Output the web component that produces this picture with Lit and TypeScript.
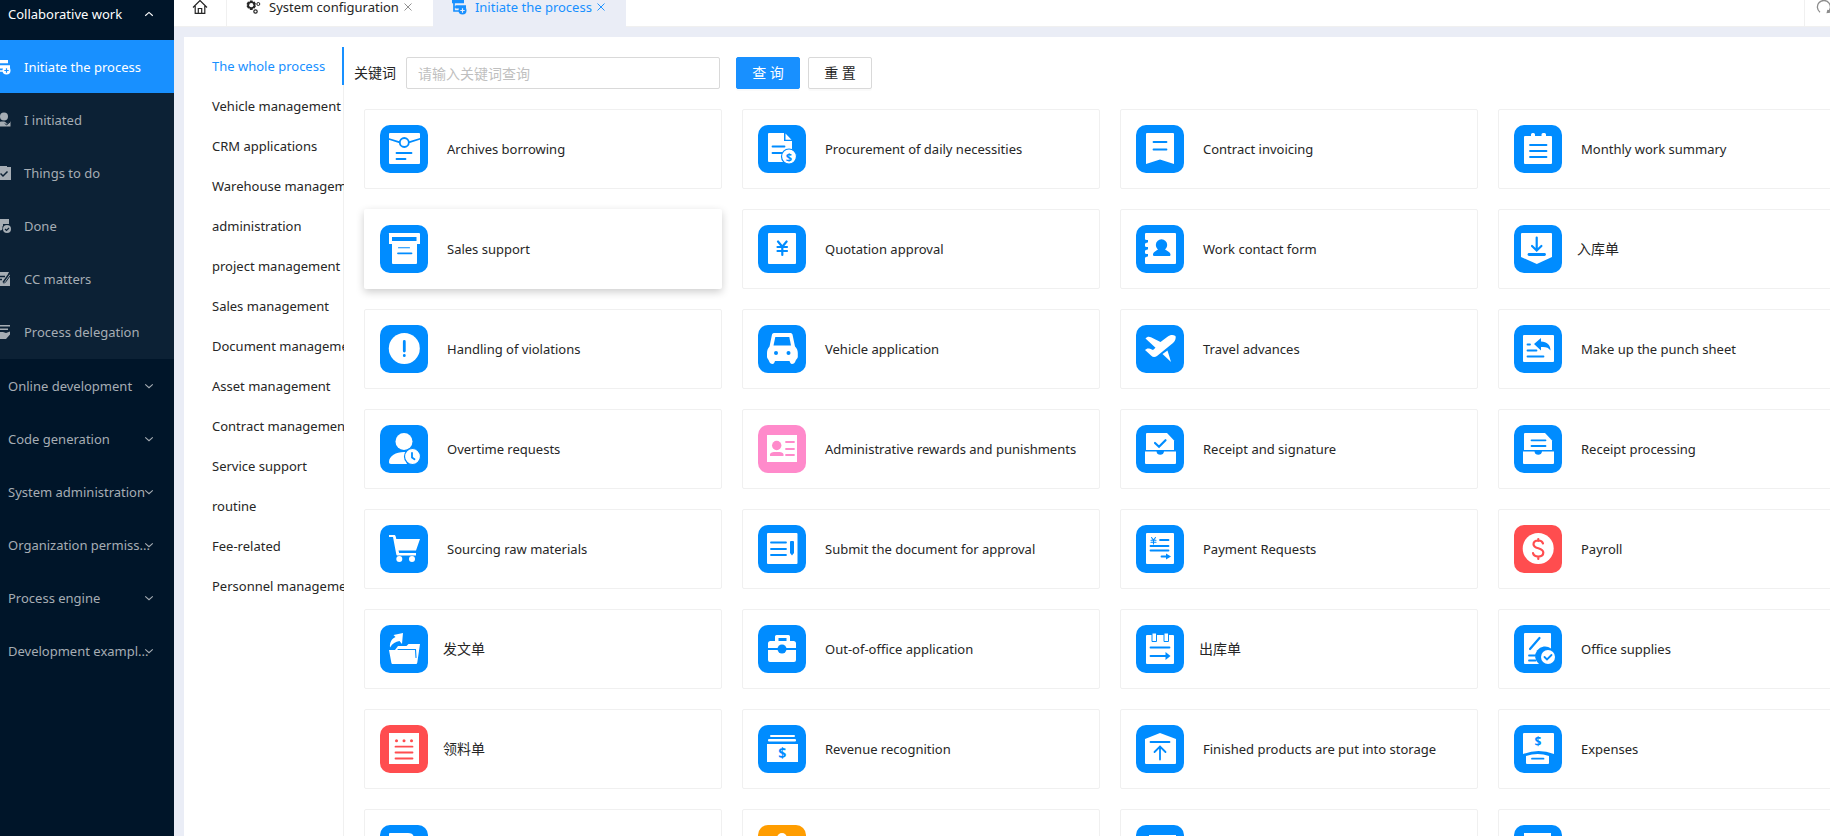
import { LitElement, html, svg, css } from "lit";
import type { SVGTemplateResult } from "lit";
import { customElement, property } from "lit/decorators.js";
import { classMap } from "lit/directives/class-map.js";

/* Tile glyphs, drawn on a 48 x 48 field. Class "w" is the white shape,
   "k" a cut-out in the tile colour, "l" a line in the tile colour. */
const tiles: Record<string, SVGTemplateResult> = {
  archive: svg`<rect class="w" x="9" y="8" width="31" height="31" rx="1"/><path class="l" d="M9 14l10 3.2M39.500 14l-10 3.200M16.500 28h15M16.500 34h9"/><circle class="l" cx="24.300" cy="17.500" r="4.500"/>`,
  procurement: svg`<path class="w" d="M11 8h15v8h8v21H11a1 1 0 0 1-1-1V9a1 1 0 0 1 1-1z"/><path class="w" d="M27.500 8.500l6 6.300h-6z"/><path class="l" d="M14.500 21.500h12M14.500 28h10"/><circle class="w ring" cx="31" cy="31.500" r="7.500"/><text x="31" y="35.500" font-size="11">$</text>`,
  invoice: svg`<path class="w" d="M11 8h26a1 1 0 0 1 1 1v30l-14-4.500L10 39V9a1 1 0 0 1 1-1z"/><path class="l" d="M17.500 17h13M17.500 24.500h13"/>`,
  notepad: svg`<path class="w" d="M11 11h6V9.500a1.500 1.500 0 0 1 1.500-1.500h1A1.500 1.500 0 0 1 21 9.500V11h6.500V9.500A1.500 1.500 0 0 1 29 8h1.500A1.500 1.500 0 0 1 32 9.500V11h5a1 1 0 0 1 1 1v26a1 1 0 0 1-1 1H11a1 1 0 0 1-1-1V12a1 1 0 0 1 1-1z"/><path class="l" d="M16 20h16.500M16 26h16.500M16 32h16.500"/>`,
  box: svg`<path class="w" d="M9 8h30a1 1 0 0 1 1 1v10h-3v19a1 1 0 0 1-1 1H13a1 1 0 0 1-1-1V19H9V9a1 1 0 0 1 0-1z"/><path class="k" d="M12 12h24.500v4H12z"/><path class="l thin" d="M18.500 22.700h11"/><path class="l" d="M18 28.300h13.500"/>`,
  yuan: svg`<rect class="w" x="10" y="8" width="28" height="31" rx="1"/><path class="l mid" d="M20 16.500l4.300 5.200 4.300-5.200M24.300 21.700V30M19.500 22h9.500M19.500 26h9.500"/>`,
  contact: svg`<rect class="w" x="9" y="8" width="31" height="31" rx="1"/><path class="k" d="M9 14.500a2 2 0 1 1 0 4zM9 21.500a2 2 0 1 1 0 4zM9 28.500a2 2 0 1 1 0 4z"/><path class="k" d="M9 15h3v2.500H9zM9 22h3v2.500H9zM9 29h3v2.500H9z"/><circle class="k" cx="25.500" cy="20" r="5.700"/><path class="k" d="M22.500 23h6c0 2.500 6 3.500 6 6.500 0 1-.500 1.500-1.500 1.500H18.500c-1 0-1.500-.500-1.500-1.500 0-3 5.500-4 5.500-6.500z"/>`,
  inbound: svg`<path class="w" d="M8 8h29a1 1 0 0 1 1 1v23l-15.200 7L7 32V9a1 1 0 0 1 1-1z"/><path class="l mid" d="M22.700 12.500v12.500M18 21l4.700 4.500L27.400 21"/><path class="l bold" d="M15 29.500h15.500"/>`,
  alert: svg`<circle class="w" cx="24.300" cy="23.500" r="15.500"/><path class="l bold" d="M24.300 16.500v9.500M24.300 30.500v.200"/>`,
  car: svg`<path class="w" d="M16 8h16.500a2 2 0 0 1 2 1.500L37 21.500c2 2 2.800 4 2.800 6.500v4c0 1.500-2 2.500-2.300 4-.500 1.800-2 3-3.500 3s-2-1.500-2.500-3H17c-.500 1.500-1 3-2.500 3s-3-1.200-3.500-3c-.300-1.500-2-2.500-2-4v-4c0-2.500.800-4.500 2.500-6.500L14 9.500A2 2 0 0 1 16 8z"/><path class="k" d="M17.300 12h14l1.700 8.500H15.500z"/><circle class="k" cx="18" cy="28" r="2"/><circle class="k" cx="30.500" cy="28" r="2"/>`,
  plane: svg`<path class="w" d="M9.500 13.500c1.500-2 3.500-2.200 5.500-1.300l9.500 4.800 7-5.200c2.500-2 5.500-2.300 8-.800.800 2.500-.500 5-2.500 7L21 31c-2 1.300-4.200 1.300-5.700-.300L9 25c1.500-1.700 3.200-2 5-1.200l3 1.200 2.500-2.300z"/><path class="w" d="M26.500 29l5-3.500L35 37z"/>`,
  punch: svg`<rect class="w" x="9" y="10" width="31" height="27" rx="1"/><path class="l" d="M13.500 19.500h2.500M13.500 25.500h9M13.500 31.500h16"/><path class="k" d="M20 19l7-6v3.500c6 0 9.500 3.500 9.500 9-2-3-5-4-9.500-3.500v3.500z"/>`,
  overtime: svg`<circle class="w" cx="24" cy="16.500" r="8.500"/><path class="w" d="M9 37c0-6 7-10 15-10 3 0 5.500.500 7 1l-6 6 2 5H11c-1.500 0-2-.700-2-2z"/><circle class="w ring" cx="32.500" cy="31.500" r="8"/><path class="l" d="M32 28v4.500l2.500 1.800"/>`,
  badge: svg`<rect class="w" x="9" y="10" width="30" height="27"/><circle class="k" cx="18.700" cy="20.500" r="4.700"/><path class="k" d="M12 31v-1.500c0-1.500 2-2.500 4-2.500h5.500c2 0 4 1 4 2.500V31z"/><path class="l" d="M28 17h8M28 24h8M28 30h8"/>`,
  receipt: svg`<path class="w" d="M11 8h20l7 7.500V25H10V9a1 1 0 0 1 1-1z"/><path class="l mid" d="M19 18l4 3.700 6.500-6.500"/><path class="w" d="M9 26.500h11.500a3.800 3.800 0 0 0 7.500 0H40V38a1 1 0 0 1-1 1H10a1 1 0 0 1-1-1z"/>`,
  processing: svg`<path class="w" d="M11 8h20l7 7.500V25H10V9a1 1 0 0 1 1-1z"/><path class="l" d="M17.500 15.300h14M17.500 21h14"/><path class="w" d="M9 26.500h11.500a3.800 3.800 0 0 0 7.500 0H40V38a1 1 0 0 1-1 1H10a1 1 0 0 1-1-1z"/>`,
  cart: svg`<path class="w" d="M9 10h5c1 0 1.500.500 1.700 1.500l.600 2.500H40l-4 11.500H18.500l.700 2.500H36v2.500H17.500c-.700 0-1-.500-1.200-1L13 12H9z"/><circle class="w" cx="19.300" cy="34" r="3"/><circle class="w" cx="32" cy="34" r="3"/>`,
  submit: svg`<rect class="w" x="9" y="8" width="30.500" height="31" rx="1"/><path class="l" d="M13 17.500h15M13 24h15M13 30h15"/><path class="k" d="M33 16h2a1 1 0 0 1 1 1v11l-2 2.500-2-2.500V17a1 1 0 0 1 1-1z"/>`,
  payment: svg`<rect class="w" x="10" y="8" width="28" height="31" rx="1"/><path class="l thin" d="M15.500 12.500l2 2.500 2-2.500M17.500 15v4M15 15.300h5M15 17.200h5"/><path class="l" d="M24 15h8.500M14.500 21h18M14.500 25.500h18M25.500 31.500h5"/><path class="k" d="M30 28.500l5 3-5 3z"/>`,
  payroll: svg`<circle class="w" cx="24.200" cy="23.500" r="15.500"/><path class="l mid" d="M29 18.500c-.500-2-2.300-3-4.700-3-2.800 0-4.800 1.300-4.800 3.700 0 5.300 9.800 2.900 9.800 8.400 0 2.600-2.100 4-5 4-2.700 0-4.800-1.200-5.300-3.500M24.300 14v2M24.300 31.500v2.500"/>`,
  outgoing: svg`<path class="w" d="M9 25h6l3-4h8.500l2-2H40l-2.700 18.500c-.200 1-.700 1.500-1.500 1.500H13c-1 0-1.500-.500-1.700-1.500z"/><path class="l thin" d="M18 24.500h17.500l.500 8"/><path class="w" d="M10 22.500c-.500-5.500 2-9 5.500-10.500l-2-2L23 8l-1 11-2.500-3c-4 .500-7 2.500-9.500 6.500z"/>`,
  briefcase: svg`<path class="w" d="M12.500 16H17v-4.500a1.500 1.500 0 0 1 1.500-1.500h12a1.500 1.500 0 0 1 1.500 1.500V16h3.500a2.500 2.500 0 0 1 2.500 2.500V35a2 2 0 0 1-2 2H12a2 2 0 0 1-2-2V18.500a2.500 2.500 0 0 1 2.500-2.500z"/><path class="k" d="M20.500 13h8v3h-8z"/><path class="l" d="M10 24h28"/><circle class="k" cx="24" cy="24" r="4.500"/>`,
  outbound: svg`<rect class="w" x="10" y="10" width="28" height="29" rx="1"/><path class="w edge" d="M16 8h4.500v8.500H16zM28 8h4.500v8.500H28z"/><path class="l" d="M14.500 22.500h19M14.500 31h17"/><path class="k" d="M29.500 27l5 4-5 4z"/>`,
  supplies: svg`<path class="w" d="M11 8h25a1 1 0 0 1 1 1v30H11a1 1 0 0 1-1-1V9a1 1 0 0 1 1-1z"/><path class="l mid" d="M16 24l9.500-11"/><path class="l" d="M15 30.500h9M15 35.500h6.500"/><path class="k" d="M25 39a9 9 0 0 1 12-15.500V40z"/><circle class="w" cx="34" cy="32" r="7"/><path class="l" d="M30.500 32l2.500 2.500 4.500-4.500"/>`,
  requisition: svg`<rect class="w" x="9" y="8" width="30" height="31"/><circle class="k" cx="16.500" cy="15.700" r="1.500"/><circle class="k" cx="24" cy="15.700" r="1.500"/><circle class="k" cx="31.500" cy="15.700" r="1.500"/><path class="l" d="M15.500 21.700h17M15.500 27.500h17M15.500 33.500h17"/>`,
  revenue: svg`<rect class="w" x="12" y="10" width="25" height="2" rx="1"/><rect class="w" x="10" y="14" width="28" height="2.500" rx="1"/><rect class="w" x="9" y="19" width="31" height="18"/><text x="24.300" y="33" font-size="14">$</text>`,
  storage: svg`<path class="w" d="M9 14l15-6 16 6v24a1 1 0 0 1-1 1H10a1 1 0 0 1-1-1z"/><path class="l" d="M14.500 17h19M24 34.500V21.500M18.500 27l5.500-5.500 5.500 5.500"/>`,
  expenses: svg`<path class="w" d="M10 8h29a1 1 0 0 1 1 1v20q-15.500-6-31 0V9a1 1 0 0 1 1-1z"/><path class="w" d="M12 31q12-4 23 0v7a1 1 0 0 1-1 1H13a1 1 0 0 1-1-1z"/><path class="l" d="M18 33.700h11.500"/><text x="24" y="21" font-size="12">$</text>`,
  sheet: svg`<path class="w" d="M10 8h18c5 0 6 3 6 6v25H9V9a1 1 0 0 1 1-1z"/>`,
  person: svg`<circle class="w" cx="24" cy="13" r="5"/><path class="w" d="M12 38c0-12 5-19 12-19s12 7 12 19z"/>`,
  page: svg`<rect class="w" x="13" y="10" width="27" height="29"/>`,
  form: svg`<rect class="w" x="10" y="8" width="27" height="31"/>`,
};

/* Line and glyph icons for the menu and the tab bar, on a 16 x 16 field. */
const glyphs: Record<string, SVGTemplateResult> = {
  start: svg`<path d="M1 1h12v3.300H1zM4.500 6.300H15v3.200H4.500z"/><path d="M3 4v4h2M3 8v4h5" fill="none" stroke="currentColor" stroke-width="1.700"/><circle cx="11.500" cy="11.500" r="4" /><path d="M11.500 9.300v4.400M9.300 11.500h4.400" stroke="var(--cut)" stroke-width="1.200"/>`,
  user: svg`<circle cx="9" cy="4.500" r="4"/><path d="M1 14.500c0-4 3-5 7-5 1.500 0 2.500.500 3 1l1 1.500 3.500-2.500v5z"/><path d="M10 11.500l1.500 1.500 3.500-3" fill="none" stroke="var(--cut)"/>`,
  todo: svg`<path d="M2 2h3V1h7v1h4v13H1V2z"/><path d="M5.500 8.500l2.500 2.500 4.500-4.500" fill="none" stroke="var(--cut)" stroke-width="1.500"/>`,
  done: svg`<path d="M3 1h11v5H8v2.500H5V15H1V9h3V6H3z"/><circle cx="12" cy="11" r="4"/><circle cx="5" cy="10" r="2.500"/><path d="M10 11l1.500 1.500 2.500-2.500" fill="none" stroke="var(--cut)" stroke-width="1.200"/>`,
  cc: svg`<path d="M1 1h13l-1 2 2 1v11H1z"/><path d="M3 5.500h7M3 8.500h4M14 3l-6 8.500" fill="none" stroke="var(--cut)" stroke-width="1.400"/><path d="M15.700 4L11 10.500l-2 2" fill="none" stroke="var(--cut)" stroke-width="1"/>`,
  delegate: svg`<path d="M4 1h11v1.500H4zM3 4.500h10V6H3zM2 8h6l3 1 4-1.500v3L11 15H5l-3-2z"/>`,
  home: svg`<path d="M1 8.500L8 1.500l7 7M3.200 7v7.300h9.600V7M6.300 14v-4.500h3.400V14" fill="none" stroke="currentColor" stroke-width="1.200"/>`,
  gears: svg`<path d="M5 1.500h2.500l.5 1.500 1.500-.500L11 5l-1 1 1 1-1.500 2.500L8 9.300l-.5 1.700H5l-.5-1.700-1.500.200L1.500 7l1-1-1-1L3 2.500l1.500.500z"/><circle cx="6.300" cy="6.200" r="2.100" fill="var(--cut)"/><circle cx="13.300" cy="5" r="1.500" fill="none" stroke="currentColor"/><circle cx="10.500" cy="12.500" r="1.700" fill="none" stroke="currentColor" stroke-width="1.200"/>`,
  down: svg`<path d="M3.700 6.200L8 10l4.300-3.800" fill="none" stroke="currentColor" stroke-width="1.300"/>`,
  up: svg`<path d="M3.700 10L8 6.200l4.300 3.800" fill="none" stroke="currentColor" stroke-width="1.300"/>`,
  close: svg`<path d="M4 4l8 8M12 4l-8 8" fill="none" stroke="currentColor" stroke-width="1.100"/>`,
  reload: svg`<path d="M4 13.200A6.500 6.500 0 1 1 11.500 13.400M14 13l-2.700.500L12 10.800" fill="none" stroke="currentColor" stroke-width="1.300"/>`,
};

type Process = [icon: string, title?: string, color?: string];

const BLUE = "#008cff";

const processes: Process[] = [
  ["archive", "Archives borrowing"],
  ["procurement", "Procurement of daily necessities"],
  ["invoice", "Contract invoicing"],
  ["notepad", "Monthly work summary"],
  ["box", "Sales support"],
  ["yuan", "Quotation approval"],
  ["contact", "Work contact form"],
  ["inbound", "入库单"],
  ["alert", "Handling of violations"],
  ["car", "Vehicle application"],
  ["plane", "Travel advances"],
  ["punch", "Make up the punch sheet"],
  ["overtime", "Overtime requests"],
  ["badge", "Administrative rewards and punishments", "#ff8acb"],
  ["receipt", "Receipt and signature"],
  ["processing", "Receipt processing"],
  ["cart", "Sourcing raw materials"],
  ["submit", "Submit the document for approval"],
  ["payment", "Payment Requests"],
  ["payroll", "Payroll", "#ff4d4f"],
  ["outgoing", "发文单"],
  ["briefcase", "Out-of-office application"],
  ["outbound", "出库单"],
  ["supplies", "Office supplies"],
  ["requisition", "领料单", "#ff4d4f"],
  ["revenue", "Revenue recognition"],
  ["storage", "Finished products are put into storage"],
  ["expenses", "Expenses"],
  ["sheet"],
  ["person", "", "#ff9d00"],
  ["page"],
  ["form"],
];

const categories = [
  "The whole process", "Vehicle management", "CRM applications", "Warehouse management",
  "administration", "project management", "Sales management", "Document management",
  "Asset management", "Contract management", "Service support", "routine",
  "Fee-related", "Personnel management",
];

const work: [string, string][] = [
  ["start", "Initiate the process"],
  ["user", "I initiated"],
  ["todo", "Things to do"],
  ["done", "Done"],
  ["cc", "CC matters"],
  ["delegate", "Process delegation"],
];

const sections = [
  "Online development", "Code generation", "System administration",
  "Organization permiss...", "Process engine", "Development exampl...",
];

const glyph = (name: string) =>
  html`<svg class="glyph" viewBox="0 0 16 16" fill="currentColor" aria-hidden="true">${glyphs[name]}</svg>`;

const shared = css`
  *, *::before, *::after { box-sizing: border-box; }
  a { color: inherit; text-decoration: none; }
  button { font: inherit; color: inherit; cursor: pointer; }
  ul { list-style: none; margin: 0; padding: 0; }
  .glyph { display: block; width: 16px; height: 16px; flex: none; }
`;

@customElement("side-menu")
export class SideMenu extends LitElement {
  static styles = [shared, css`
    :host { display: block; background: #001529; color: #a6adb4; --cut: #0c2135; }
    nav { margin-top: -13px; }
    .section {
      position: relative; display: flex; align-items: center; width: 100%; height: 53px;
      padding: 0 0 0 8px; border: 0; background: none; white-space: nowrap;
    }
    .section .glyph { position: absolute; right: 18px; width: 14px; height: 14px; }
    .open { color: #fff; }
    .sub { background: #0c2135; padding-bottom: 1px; }
    .item {
      display: flex; align-items: center; gap: 13px; height: 53px; padding-left: 0;
      white-space: nowrap;
    }
    .item .glyph { margin-left: -5px; }
    .active { background: #1890ff; color: #fff; --cut: #1890ff; }
  `];

  render() {
    return html`<nav>
      <button class="section open" aria-expanded="true">Collaborative work${glyph("up")}</button>
      <ul class="sub">
        ${work.map(([icon, label], i) => html`<li>
          <a href="#" class=${classMap({ item: true, active: i === 0 })}>${glyph(icon)}<span>${label}</span></a>
        </li>`)}
      </ul>
      ${sections.map((label) => html`<button class="section" aria-expanded="false">${label}${glyph("down")}</button>`)}
    </nav>`;
  }
}

@customElement("tab-bar")
export class TabBar extends LitElement {
  static styles = [shared, css`
    :host {
      display: flex; height: 40px; margin-top: -13px; background: #fff;
      border-bottom: 1px solid #f0f0f0; color: #262626; --cut: #fff;
    }
    .home { display: flex; align-items: center; width: 53px; padding-left: 18px; border-right: 1px solid #f0f0f0; }
    .tab { display: flex; align-items: center; padding: 0 18px; white-space: nowrap; }
    .tab a { display: flex; align-items: center; gap: 8px; }
    .close { padding: 0; border: 0; background: none; color: #8c8c8c; }
    .close .glyph { width: 14px; height: 14px; margin: 0 0 0 2px; }
    .active, .active .close { color: #1890ff; }
    .active { background: #eaedf6; margin-bottom: -1px; --cut: #eaedf6; }
    .reload {
      width: 26px; margin-left: auto; padding: 0 0 0 11px; border: 0;
      border-left: 1px solid #f0f0f0; background: none; color: #8c8c8c;
    }
  `];

  render() {
    return html`
      <a class="home" href="#" aria-label="Home">${glyph("home")}</a>
      <div class="tab"><a href="#">${glyph("gears")}System configuration</a><button class="close" aria-label="Close">${glyph("close")}</button></div>
      <div class="tab active"><a href="#">${glyph("start")}Initiate the process</a><button class="close" aria-label="Close">${glyph("close")}</button></div>
      <button class="reload" aria-label="Reload">${glyph("reload")}</button>
    `;
  }
}

@customElement("process-card")
export class ProcessCard extends LitElement {
  @property({ attribute: false }) item: Process = ["form"];
  @property({ type: Boolean }) raised = false;

  static styles = [shared, css`
    :host { display: block; min-width: 0; }
    .card {
      display: flex; align-items: center; gap: 15px; height: 80px; padding: 0 15px;
      border: 1px solid #f0f0f0; border-radius: 2px; background: #fff; color: #262626;
    }
    .raised { border-color: transparent; box-shadow: 0 3px 8px rgba(0, 0, 0, 0.2); }
    .tile { width: 48px; height: 48px; border-radius: 10px; flex: none; background: var(--tile); }
    .title { white-space: nowrap; padding-left: 4px; }
    .cjk { padding-left: 0; font-size: 14px; }
    .w { fill: #fff; }
    .k { fill: var(--tile); }
    .l { fill: none; stroke: var(--tile); stroke-width: 1.8; stroke-linecap: round; }
    .thin { stroke-width: 1.1; }
    .mid { stroke-width: 2.2; }
    .bold { stroke-width: 2.8; }
    .ring { stroke: var(--tile); stroke-width: 1.2; }
    .edge { stroke: var(--tile); stroke-width: 1; }
    text { fill: var(--tile); font-family: "Open Sans", sans-serif; font-weight: 700; text-anchor: middle; }
  `];

  render() {
    const [icon, title, color] = this.item;
    const cjk = /[\u4e00-\u9fff]/.test(title ?? "");
    return html`<a href="#" class=${classMap({ card: true, raised: this.raised })} style="--tile:${color ?? BLUE}">
      <svg class="tile" viewBox="0 0 48 48" aria-hidden="true">${tiles[icon]}</svg>
      <span class=${classMap({ title: true, cjk })}>${title}</span>
    </a>`;
  }
}

@customElement("app-root")
export class AppRoot extends LitElement {
  static styles = [shared, css`
    :host {
      display: grid; grid-template-columns: 174px minmax(0, 1fr); height: 100vh; overflow: hidden;
      background: #eaedf6; color: #262626;
      font: 13px/20px "Noto Sans", "Noto Sans CJK SC", sans-serif;
    }
    side-menu, .work { min-height: 0; overflow: hidden; }
    .work { display: flex; flex-direction: column; }
    .panel {
      flex: 1; min-height: 0; display: grid; grid-template-columns: 160px minmax(0, 1fr);
      margin: 10px 0 0 10px; padding-top: 10px; background: #fff; overflow: hidden;
    }
    .categories {
      display: flex; flex-direction: column; gap: 2px; overflow: hidden;
      box-shadow: inset -1px 0 #f0f0f0;
    }
    .category {
      display: flex; align-items: center; height: 38px; padding-left: 28px; flex: none;
      white-space: nowrap;
    }
    .current { color: #1890ff; border-right: 2px solid #1890ff; }
    .content { min-width: 0; padding: 10px 0 0 10px; }
    .search { display: flex; align-items: center; font-size: 14px; }
    .search label { margin-right: 10px; }
    .search input {
      width: 314px; height: 32px; margin-right: 16px; padding: 0 11px; outline: 0;
      border: 1px solid #d9d9d9; border-radius: 2px; font: inherit; color: inherit;
    }
    .search input::placeholder { color: #bfbfbf; }
    .search button {
      width: 64px; height: 32px; margin-right: 8px; padding: 0; background: #fff;
      border: 1px solid #d9d9d9; border-radius: 2px; box-shadow: 0 2px 0 rgba(0, 0, 0, 0.02);
    }
    .search .primary { background: #1890ff; border-color: #1890ff; color: #fff; }
    .cards {
      display: grid; grid-template-columns: repeat(4, minmax(0, 1fr)); gap: 20px;
      margin: 20px -26px 0 10px;
    }
  `];

  render() {
    return html`
      <side-menu></side-menu>
      <div class="work">
        <tab-bar></tab-bar>
        <main class="panel">
          <nav class="categories">
            ${categories.map((name, i) => html`<a href="#" class=${classMap({ category: true, current: i === 0 })}>${name}</a>`)}
          </nav>
          <section class="content">
            <form class="search">
              <label for="keyword">关键词</label>
              <input id="keyword" type="text" placeholder="请输入关键词查询">
              <button class="primary" type="button">查 询</button>
              <button type="button">重 置</button>
            </form>
            <div class="cards">
              ${processes.map((item, i) => html`<process-card .item=${item} ?raised=${i === 4}></process-card>`)}
            </div>
          </section>
        </main>
      </div>
    `;
  }
}
